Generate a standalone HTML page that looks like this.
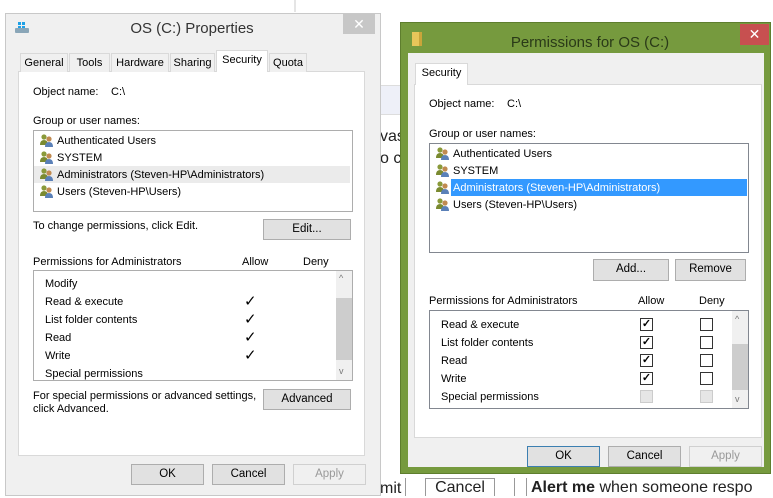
<!DOCTYPE html>
<html><head><meta charset="utf-8"><style>
*{box-sizing:border-box;margin:0;padding:0}
body{width:773px;height:496px;position:relative;overflow:hidden;background:#fff;font-family:"Liberation Sans",sans-serif;font-size:11px;color:#000}
.a{position:absolute;white-space:nowrap}
.t{position:absolute;white-space:nowrap;padding-top:1px}
.btn{position:absolute;background:#e1e1e1;border:1px solid #adadad;text-align:center;line-height:19px;font-size:11.5px}
.box{position:absolute;background:#fff;border:1px solid #828790}
.panel{position:absolute;background:#fff;border:1px solid #d9d9d9}
.tab{position:absolute;background:#f0f0f0;border:1px solid #d9d9d9;border-bottom:none;text-align:center;line-height:18px;font-size:11px}
.cb{position:absolute;width:13px;height:13px;border:1px solid #333;background:#fff;font-size:11px;line-height:11px;text-align:center;font-weight:bold}
.cbd{position:absolute;width:13px;height:13px;border:1px solid #ccc;background:#e6e6e6}
.sb{position:absolute;width:16px;background:#f0f0f0}
.th{position:absolute;width:16px;background:#cdcdcd}
</style></head><body>
<div class="a" style="left:294px;top:0;width:2px;height:12px;background:#e5e5e5"></div>
<div class="a" style="left:380px;top:85px;width:30px;height:30px;background:#eef0f8;border-top:1px solid #ddd;border-bottom:1px solid #ddd"></div>
<div class="a" style="left:380px;top:128px;font-size:16px;color:#222">vas</div>
<div class="a" style="left:380px;top:150px;font-size:16px;color:#222">o cl</div>
<div class="a" style="left:380px;top:480px;font-size:16px;color:#222">mit</div>
<div class="a" style="left:405px;top:478px;width:1px;height:18px;background:#999"></div>
<div class="a" style="left:425px;top:478px;width:70px;height:18px;border:1px solid #999;border-bottom:none;font-size:16px;text-align:center;line-height:18px;color:#222">Cancel</div>
<div class="a" style="left:514px;top:478px;width:1px;height:18px;background:#999"></div>
<div class="a" style="left:526px;top:478px;width:1px;height:18px;background:#999"></div>
<div class="a" style="left:531px;top:479px;font-size:16px;color:#222"><b>Alert me</b> when someone respo</div>

<!-- LEFT DIALOG -->
<div class="a" style="left:5px;top:13px;width:376px;height:483px;background:#f0f0f0;border:1px solid #c8c8c8"></div>
<div class="a" style="left:13px;top:21px;width:18px;height:14px"><svg width="18" height="14"><rect x="2" y="7" width="14" height="5" rx="1" fill="#8aa6b8"/><rect x="5" y="1" width="3" height="3" fill="#1ea0e6"/><rect x="9" y="1" width="3" height="3" fill="#1ea0e6"/><rect x="5" y="5" width="3" height="2" fill="#1ea0e6"/><rect x="9" y="5" width="3" height="2" fill="#1ea0e6"/></svg></div>
<div class="a" style="left:0;width:384px;top:20px;text-align:center;font-size:15px;color:#333">OS (C:) Properties</div>
<div class="a" style="left:343px;top:14px;width:32px;height:20px;background:#c7c7c7;color:#fff;text-align:center;font-size:14px;line-height:20px">✕</div>
<div class="panel" style="left:18px;top:71px;width:347px;height:385px"></div>
<div class="tab" style="left:20px;top:53px;width:48px">General</div>
<div class="tab" style="left:69px;top:53px;width:41px">Tools</div>
<div class="tab" style="left:111px;top:53px;width:58px">Hardware</div>
<div class="tab" style="left:170px;top:53px;width:45px">Sharing</div>
<div class="tab" style="left:216px;top:50px;width:52px;height:22px;background:#fff">Security</div>
<div class="tab" style="left:269px;top:53px;width:38px">Quota</div>
<div class="t" style="left:33px;top:85px">Object name:</div>
<div class="t" style="left:111px;top:85px">C:\</div>
<div class="t" style="left:33px;top:114px">Group or user names:</div>
<div class="box" style="left:33px;top:130px;width:320px;height:82px;border-color:#adadad"></div>
<div class="a" style="left:34px;top:166px;width:316px;height:17px;background:#ebebeb"></div>
<div class="t" style="left:57px;top:134px">Authenticated Users</div>
<div class="t" style="left:57px;top:151px">SYSTEM</div>
<div class="t" style="left:57px;top:168px">Administrators (Steven-HP\Administrators)</div>
<div class="t" style="left:57px;top:185px">Users (Steven-HP\Users)</div>
<div class="t" style="left:33px;top:219px">To change permissions, click Edit.</div>
<div class="btn" style="left:263px;top:219px;width:88px;height:21px">Edit...</div>
<div class="t" style="left:33px;top:255px">Permissions for Administrators</div>
<div class="t" style="left:242px;top:255px">Allow</div>
<div class="t" style="left:303px;top:255px">Deny</div>
<div class="box" style="left:33px;top:270px;width:320px;height:111px;border-color:#adadad"></div>
<div class="sb" style="left:336px;top:271px;height:109px"></div>
<div class="th" style="left:336px;top:298px;height:62px"></div>
<div class="a" style="left:339px;top:273px;font-size:9px;color:#777">^</div>
<div class="a" style="left:339px;top:366px;font-size:9px;color:#777">v</div>
<div class="t" style="left:45px;top:277px">Modify</div>
<div class="t" style="left:45px;top:295px">Read &amp; execute</div>
<div class="t" style="left:45px;top:313px">List folder contents</div>
<div class="t" style="left:45px;top:331px">Read</div>
<div class="t" style="left:45px;top:349px">Write</div>
<div class="t" style="left:45px;top:367px">Special permissions</div>
<div class="a" style="left:244px;top:292px;font-size:15px">✓</div>
<div class="a" style="left:244px;top:310px;font-size:15px">✓</div>
<div class="a" style="left:244px;top:328px;font-size:15px">✓</div>
<div class="a" style="left:244px;top:346px;font-size:15px">✓</div>
<div class="t" style="left:33px;top:389px">For special permissions or advanced settings,</div>
<div class="t" style="left:33px;top:402px">click Advanced.</div>
<div class="btn" style="left:263px;top:389px;width:88px;height:21px">Advanced</div>
<div class="btn" style="left:131px;top:464px;width:73px;height:21px">OK</div>
<div class="btn" style="left:212px;top:464px;width:73px;height:21px">Cancel</div>
<div class="btn" style="left:293px;top:464px;width:73px;height:21px;background:#f0f0f0;border-color:#d0d0d0;color:#999">Apply</div>

<!-- RIGHT DIALOG -->
<div class="a" style="left:400px;top:22px;width:371px;height:452px;background:#769a3e;border:1px solid #5e7e2e"></div>
<div class="a" style="left:412px;top:32px;width:10px;height:14px;background:#e8c65a;border-right:3px solid #c9a53a"></div>
<div class="a" style="left:400px;width:380px;top:34px;text-align:center;font-size:15px;color:#2a3a18">Permissions for OS (C:)</div>
<div class="a" style="left:740px;top:24px;width:29px;height:21px;background:#c75050;color:#fff;text-align:center;font-size:14px;line-height:21px">✕</div>
<div class="a" style="left:408px;top:53px;width:356px;height:414px;background:#f0f0f0"></div>
<div class="panel" style="left:414px;top:84px;width:348px;height:354px"></div>
<div class="tab" style="left:415px;top:63px;width:53px;height:22px;background:#fff">Security</div>
<div class="t" style="left:429px;top:97px">Object name:</div>
<div class="t" style="left:507px;top:97px">C:\</div>
<div class="t" style="left:429px;top:127px">Group or user names:</div>
<div class="box" style="left:429px;top:143px;width:320px;height:110px"></div>
<div class="a" style="left:451px;top:179px;width:296px;height:17px;background:#3399ff"></div>
<div class="t" style="left:453px;top:147px">Authenticated Users</div>
<div class="t" style="left:453px;top:164px">SYSTEM</div>
<div class="t" style="left:453px;top:181px;color:#fff">Administrators (Steven-HP\Administrators)</div>
<div class="t" style="left:453px;top:198px">Users (Steven-HP\Users)</div>
<div class="btn" style="left:593px;top:259px;width:76px;height:22px">Add...</div>
<div class="btn" style="left:675px;top:259px;width:71px;height:22px">Remove</div>
<div class="t" style="left:429px;top:294px">Permissions for Administrators</div>
<div class="t" style="left:638px;top:294px">Allow</div>
<div class="t" style="left:699px;top:294px">Deny</div>
<div class="box" style="left:429px;top:310px;width:320px;height:99px"></div>
<div class="sb" style="left:732px;top:311px;height:97px"></div>
<div class="th" style="left:732px;top:344px;height:46px"></div>
<div class="a" style="left:735px;top:314px;font-size:9px;color:#777">^</div>
<div class="a" style="left:735px;top:394px;font-size:9px;color:#777">v</div>
<div class="t" style="left:441px;top:318px">Read &amp; execute</div>
<div class="t" style="left:441px;top:336px">List folder contents</div>
<div class="t" style="left:441px;top:354px">Read</div>
<div class="t" style="left:441px;top:372px">Write</div>
<div class="t" style="left:441px;top:390px">Special permissions</div>
<div class="cb" style="left:640px;top:318px">✓</div><div class="cb" style="left:700px;top:318px"></div>
<div class="cb" style="left:640px;top:336px">✓</div><div class="cb" style="left:700px;top:336px"></div>
<div class="cb" style="left:640px;top:354px">✓</div><div class="cb" style="left:700px;top:354px"></div>
<div class="cb" style="left:640px;top:372px">✓</div><div class="cb" style="left:700px;top:372px"></div>
<div class="cbd" style="left:640px;top:390px"></div><div class="cbd" style="left:700px;top:390px"></div>
<div class="btn" style="left:527px;top:446px;width:73px;height:21px;border-color:#3c7fb1">OK</div>
<div class="btn" style="left:608px;top:446px;width:73px;height:21px">Cancel</div>
<div class="btn" style="left:689px;top:446px;width:73px;height:21px;background:#f0f0f0;border-color:#d0d0d0;color:#999">Apply</div>

<svg class="a" style="left:0;top:0" width="773" height="496">
<defs><g id="u"><circle cx="5" cy="4" r="2.6" fill="#8a9a3a"/><path d="M1 12 Q1 7 5 7 Q9 7 9 12Z" fill="#7a8a30"/><circle cx="10" cy="6" r="2.6" fill="#c08a50"/><path d="M6 14 Q6 9 10 9 Q14 9 14 14Z" fill="#5a80b8"/></g></defs>
<use href="#u" x="39" y="133"/><use href="#u" x="39" y="150"/><use href="#u" x="39" y="167"/><use href="#u" x="39" y="184"/>
<use href="#u" x="435" y="146"/><use href="#u" x="435" y="163"/><use href="#u" x="435" y="180"/><use href="#u" x="435" y="197"/>
</svg>
</body></html>
